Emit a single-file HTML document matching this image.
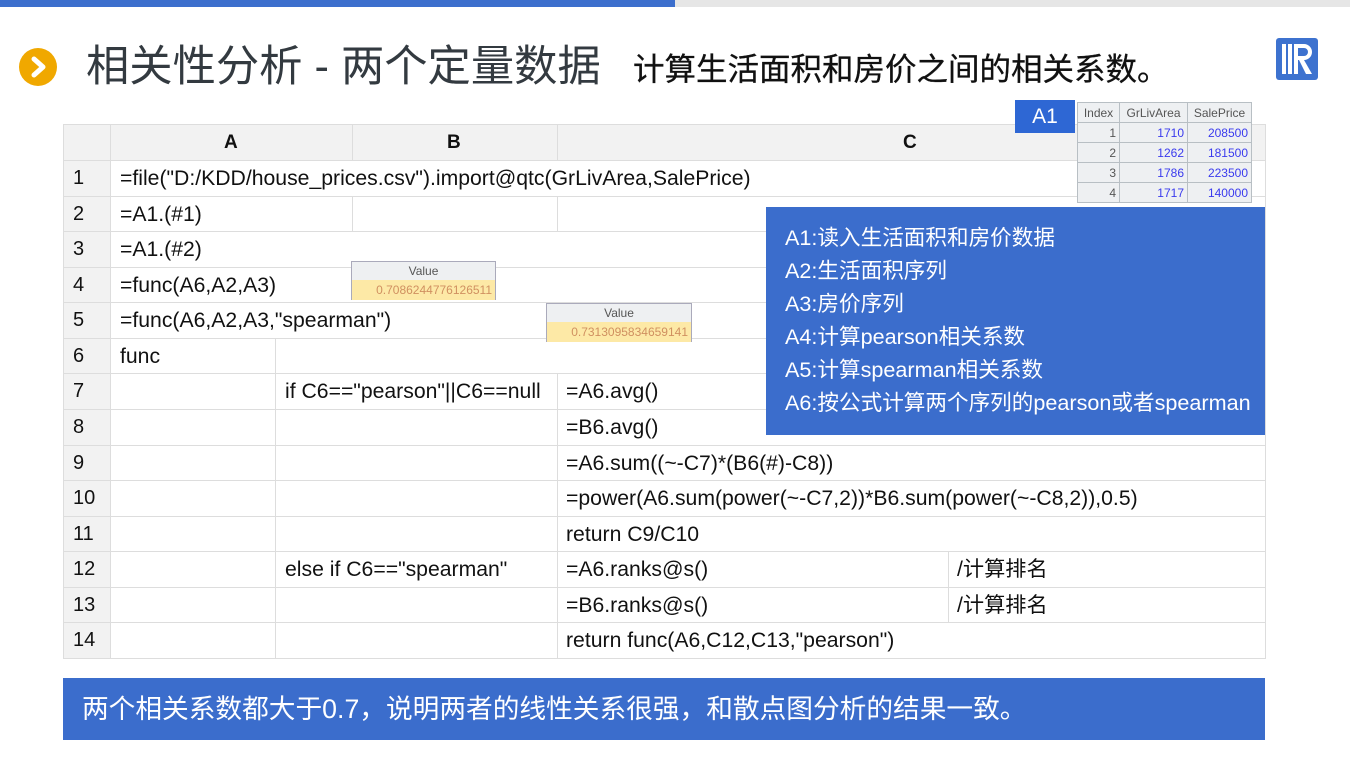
<!DOCTYPE html>
<html><head><meta charset="utf-8"><style>
*{margin:0;padding:0;box-sizing:border-box}
body{width:1350px;height:759px;background:#fff;position:relative;overflow:hidden;font-family:"Liberation Sans","Noto Sans CJK SC",sans-serif}
.a{position:absolute}
.c{position:absolute;font-size:21.2px;color:#111;white-space:nowrap;line-height:37px}
.h{position:absolute;background:#ddd;height:1px}
.v{position:absolute;background:#ddd;width:1px}
.note{font-size:21.6px;color:#fff;line-height:33px}
.st td{border:1px solid #b8bfc4;font-size:12px;text-align:right;padding:0 3px;height:20px;color:#3a3aee}
.st th{border:1px solid #b8bfc4;font-size:12px;font-weight:normal;color:#555;background:#eef0f2;height:20px}
</style></head><body>
<div class="a" style="left:0;top:0;width:675px;height:7px;background:#3c6fcd"></div>
<div class="a" style="left:675px;top:0;width:675px;height:7px;background:#e6e6e6"></div>
<div class="a" style="left:19px;top:48px;width:38px;height:38px;border-radius:50%;background:#f0a800"></div>
<svg class="a" style="left:19px;top:48px" width="38" height="38"><path d="M15 11 L24 19 L15 27" stroke="#fff" stroke-width="5" fill="none" stroke-linecap="round" stroke-linejoin="round"/></svg>
<div class="a" style="left:86px;top:38px;font-size:43.3px;color:#333a40;line-height:58px">相关性分析 - 两个定量数据</div>
<div class="a" style="left:633px;top:49px;font-size:31.5px;color:#111;line-height:40px;-webkit-text-stroke:0.3px #111">计算生活面积和房价之间的相关系数。</div>
<svg class="a" style="left:1276px;top:38px" width="42" height="42"><rect width="42" height="42" rx="3" fill="#3d72cf"/><rect x="6" y="6" width="4" height="30" fill="#fff"/><rect x="12" y="6" width="4" height="30" fill="#fff"/><path d="M18 6 H28 A8 8 0 0 1 28 22 L36 36 H30 L23 22 H22 V36 H18 Z M22 10 V18 H28 A4 4 0 0 0 28 10 Z" fill="#fff"/></svg>

<div class="a" style="left:63px;top:124px;width:1202px;height:36px;background:#f2f2f2"></div>
<div class="a" style="left:63px;top:124px;width:47px;height:535px;background:#f2f2f2"></div>
<div class="h" style="left:63px;top:124px;width:1202px"></div>
<div class="h" style="left:63px;top:160px;width:1202px"></div>
<div class="v" style="left:63px;top:124px;height:535px"></div>
<div class="v" style="left:110px;top:124px;height:535px"></div>
<div class="v" style="left:1265px;top:124px;height:535px"></div>
<div class="v" style="left:352px;top:124px;height:36px"></div>
<div class="v" style="left:557px;top:124px;height:36px"></div>
<div class="v" style="left:352px;top:196px;height:35px"></div>
<div class="v" style="left:557px;top:196px;height:35px"></div>
<div class="v" style="left:275px;top:338px;height:321px"></div>
<div class="v" style="left:557px;top:373px;height:286px"></div>
<div class="v" style="left:948px;top:551px;height:72px"></div>
<div class="c" style="left:224px;top:124px;font-weight:bold;font-size:19px">A</div>
<div class="c" style="left:447px;top:124px;font-weight:bold;font-size:19px">B</div>
<div class="c" style="left:903px;top:124px;font-weight:bold;font-size:19px">C</div>
<div id="rows"></div>
<script>
var t=[["=file(\"D:/KDD/house_prices.csv\").import@qtc(GrLivArea,SalePrice)","",""],["=A1.(#1)","",""],["=A1.(#2)","",""],["=func(A6,A2,A3)","",""],["=func(A6,A2,A3,\"spearman\")","",""],["func","",""],["","if C6==\"pearson\"||C6==null","=A6.avg()"],["","","=B6.avg()"],["","","=A6.sum((~-C7)*(B6(#)-C8))"],["","","=power(A6.sum(power(~-C7,2))*B6.sum(power(~-C8,2)),0.5)"],["","","return C9/C10"],["","else if C6==\"spearman\"","=A6.ranks@s()","/计算排名"],["","","=B6.ranks@s()","/计算排名"],["","","return func(A6,C12,C13,\"pearson\")"]];
var h="";for(var i=0;i<14;i++){var y=160+i*35.57;h+='<div class="h" style="left:63px;top:'+(y+35.57).toFixed(0)+'px;width:1202px"></div>';
h+='<div class="c" style="left:73px;top:'+y.toFixed(0)+'px;font-size:20px">'+(i+1)+'</div>';
var r=t[i];if(r[0])h+='<div class="c" style="left:120px;top:'+y.toFixed(0)+'px">'+r[0]+'</div>';
if(r[1])h+='<div class="c" style="left:285px;top:'+y.toFixed(0)+'px">'+r[1]+'</div>';
if(r[2])h+='<div class="c" style="left:566px;top:'+y.toFixed(0)+'px">'+r[2]+'</div>';
if(r[3])h+='<div class="c" style="left:957px;top:'+y.toFixed(0)+'px">'+r[3]+'</div>';}
document.getElementById("rows").innerHTML=h;
</script>
<div class="a" style="left:351px;top:261px;width:145px;height:39px;border:1px solid #aab;background:#eef0f2">
<div style="height:18px;font-size:12px;color:#555;text-align:center;line-height:18px">Value</div>
<div style="height:20px;background:#fde9a6;font-size:12px;color:#d09060;text-align:right;padding-right:3px;line-height:20px">0.7086244776126511</div></div>
<div class="a" style="left:546px;top:303px;width:146px;height:39px;border:1px solid #aab;background:#eef0f2">
<div style="height:18px;font-size:12px;color:#555;text-align:center;line-height:18px">Value</div>
<div style="height:20px;background:#fde9a6;font-size:12px;color:#d09060;text-align:right;padding-right:3px;line-height:20px">0.7313095834659141</div></div>
<div class="a" style="left:1015px;top:100px;width:60px;height:33px;background:#2e67d4;color:#fff;font-size:21px;text-align:center;line-height:33px">A1</div>
<table class="a st" style="left:1077px;top:102px;border-collapse:collapse;background:#eef0f2;width:175px">
<tr><th style="width:42px">Index</th><th style="width:68px">GrLivArea</th><th>SalePrice</th></tr>
<tr><td style="color:#555">1</td><td>1710</td><td>208500</td></tr>
<tr><td style="color:#555">2</td><td>1262</td><td>181500</td></tr>
<tr><td style="color:#555">3</td><td>1786</td><td>223500</td></tr>
<tr><td style="color:#555">4</td><td>1717</td><td>140000</td></tr>
</table>
<div class="a note" style="left:766px;top:207px;width:499px;height:228px;background:#3b6dcc;padding:14px 0 0 19px">
A1:读入生活面积和房价数据<br>A2:生活面积序列<br>A3:房价序列<br>A4:计算pearson相关系数<br>A5:计算spearman相关系数<br>A6:按公式计算两个序列的pearson或者spearman</div>
<div class="a" style="left:63px;top:678px;width:1202px;height:62px;background:#3b6dcc;color:#fff;font-size:26.7px;line-height:62px;padding-left:19px">两个相关系数都大于0.7，说明两者的线性关系很强，和散点图分析的结果一致。</div>
</body></html>
